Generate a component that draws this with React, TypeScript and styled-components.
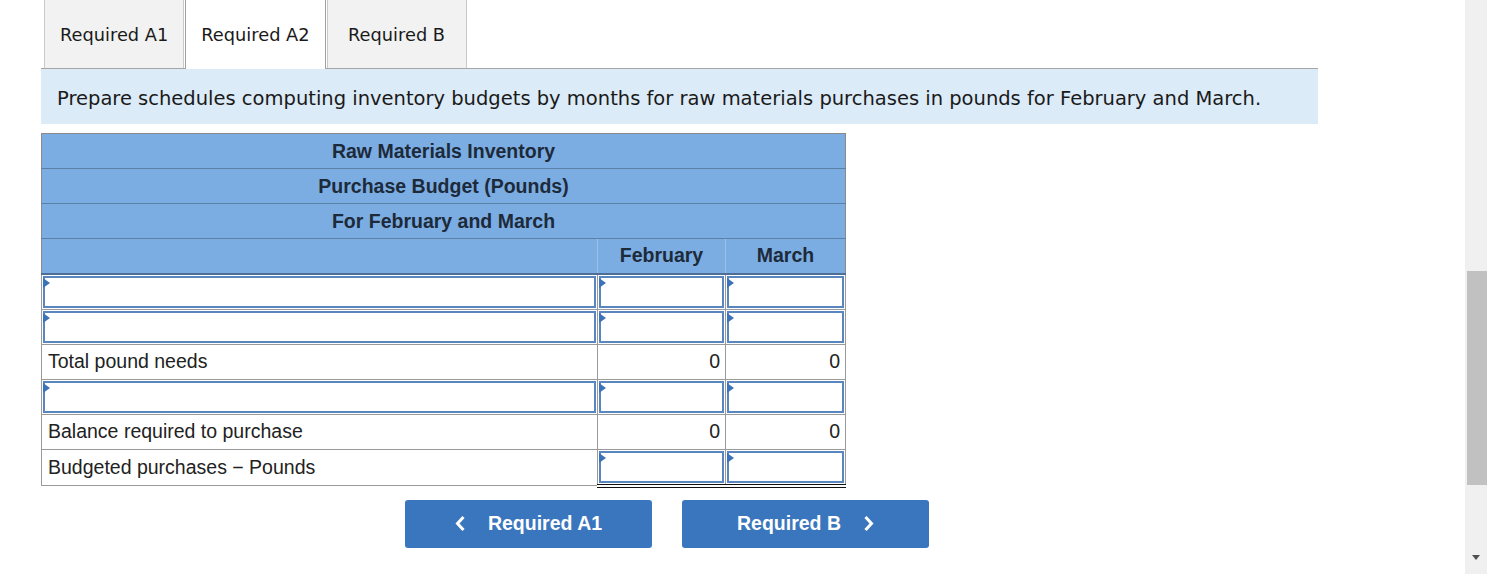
import React from 'react';
import styled, { createGlobalStyle } from 'styled-components';

const GlobalStyle = createGlobalStyle`
  html, body {
    margin: 0;
    padding: 0;
    background: #ffffff;
  }
  body {
    font-family: "Liberation Sans", Arial, sans-serif;
    color: #222;
  }
`;

const Page = styled.div`
  display: flex;
  width: 1487px;
  height: 574px;
  overflow: hidden;
`;

const Main = styled.div`
  flex: 1;
  padding-left: 41px;
`;

const TabBar = styled.div`
  display: flex;
  align-items: flex-end;
  gap: 1px;
  width: 1277px;
  height: 69px;
  padding-left: 3px;
  box-sizing: border-box;
  border-bottom: 1px solid #a6a6a6;
`;

const Tab = styled.div<{ $active?: boolean }>`
  display: flex;
  align-items: center;
  justify-content: center;
  min-width: 140px;
  height: ${p => (p.$active ? '69px' : '68px')};
  margin-bottom: ${p => (p.$active ? '-1px' : '0')};
  padding: 0 15px;
  box-sizing: border-box;
  background: ${p => (p.$active ? '#ffffff' : '#f2f2f2')};
  border: 1px solid ${p => (p.$active ? '#a0a0a0' : '#c9c9c9')};
  border-top: none;
  border-bottom: none;
  font-family: "DejaVu Sans", Verdana, sans-serif;
  font-size: 17.8px;
  color: #1a1a1a;
  white-space: nowrap;
`;

const Instructions = styled.div`
  display: flex;
  align-items: center;
  width: 1277px;
  height: 55px;
  padding: 3px 0 0 16px;
  box-sizing: border-box;
  background: #dcebf8;
  font-family: "DejaVu Sans", Verdana, sans-serif;
  font-size: 19.5px;
  color: #1a1a1a;
  white-space: nowrap;
`;

const Table = styled.table`
  margin-top: 9px;
  width: 804px;
  border-collapse: collapse;
  table-layout: fixed;
  border: 1px solid #8a8a8a;
  font-size: 19.5px;
`;

const Row = styled.tr`
  height: 35px;
`;

const TitleCell = styled.th`
  background: #7bade3;
  border-bottom: 1px solid #5f80a6;
  text-align: center;
  font-weight: bold;
  color: #1d2a3a;
  padding: 1px 0 0;
`;

const ColHead = styled.th<{ $divider?: boolean }>`
  background: #7bade3;
  border-bottom: 2px solid #4d6e95;
  border-left: ${p => (p.$divider ? '1px solid #9cc0e6' : 'none')};
  text-align: center;
  font-weight: bold;
  color: #1d2a3a;
  padding: 0;
`;

const LabelCell = styled.td`
  border: 1px solid #9a9a9a;
  padding: 0 6px;
  color: #222;
  white-space: nowrap;
`;

const ValueCell = styled.td<{ $total?: boolean }>`
  border: 1px solid #9a9a9a;
  border-top: ${p => (p.$total ? '1px solid #111' : '1px solid #9a9a9a')};
  padding: 0 5px;
  text-align: right;
  color: #222;
`;

const InputCell = styled.td<{ $double?: boolean }>`
  border: 1px solid #9a9a9a;
  border-bottom: ${p => (p.$double ? '4px double #111' : '1px solid #9a9a9a')};
  padding: 1px;
  height: 32px;
`;

const InputBox = styled.div`
  position: relative;
  height: 100%;
  box-sizing: border-box;
  border: 2px solid #5a86c0;
  background: #ffffff;

  &::before {
    content: '';
    position: absolute;
    top: 0;
    left: -2px;
    border-top: 5px solid transparent;
    border-bottom: 5px solid transparent;
    border-left: 7px solid #3c73b8;
  }
`;

const ButtonRow = styled.div`
  display: flex;
  gap: 30px;
  margin-top: 12px;
  padding-left: 364px;
`;

const NavButton = styled.button`
  display: flex;
  align-items: center;
  justify-content: center;
  gap: 22px;
  width: 247px;
  height: 48px;
  border: none;
  border-radius: 3px;
  background: #3a76bd;
  color: #ffffff;
  font-family: "Liberation Sans", Arial, sans-serif;
  font-size: 19.5px;
  font-weight: bold;
  cursor: pointer;
`;

const Scrollbar = styled.div`
  position: relative;
  width: 22px;
  height: 574px;
  background: #f0f0f0;
`;

const Thumb = styled.div`
  position: absolute;
  top: 271px;
  right: 0;
  width: 20px;
  height: 214px;
  background: #c1c1c1;
`;

const DownArrow = styled.div`
  position: absolute;
  bottom: 14px;
  left: 7px;
  border-left: 4px solid transparent;
  border-right: 4px solid transparent;
  border-top: 5px solid #505050;
`;

const Chevron: React.FC<{ dir: 'left' | 'right' }> = ({ dir }) => (
  <svg width="11" height="17" viewBox="0 0 11 17">
    <polyline
      points={dir === 'left' ? '8.5,2 2.5,8.5 8.5,15' : '2.5,2 8.5,8.5 2.5,15'}
      fill="none"
      stroke="#ffffff"
      strokeWidth="3"
    />
  </svg>
);

const InputRow: React.FC<{ double?: boolean }> = ({ double }) => (
  <Row>
    <InputCell><InputBox /></InputCell>
    <InputCell $double={double}><InputBox /></InputCell>
    <InputCell $double={double}><InputBox /></InputCell>
  </Row>
);

export default function App() {
  return (
    <>
      <GlobalStyle />
      <Page>
        <Main>
          <TabBar>
            <Tab>Required A1</Tab>
            <Tab $active>Required A2</Tab>
            <Tab>Required B</Tab>
          </TabBar>
          <Instructions>
            Prepare schedules computing inventory budgets by months for raw materials purchases in pounds for February and March.
          </Instructions>

          <Table>
            <colgroup>
              <col style={{ width: 556 }} />
              <col style={{ width: 128 }} />
              <col style={{ width: 120 }} />
            </colgroup>
            <tbody>
              <Row><TitleCell colSpan={3}>Raw Materials Inventory</TitleCell></Row>
              <Row><TitleCell colSpan={3}>Purchase Budget (Pounds)</TitleCell></Row>
              <Row><TitleCell colSpan={3}>For February and March</TitleCell></Row>
              <Row>
                <ColHead />
                <ColHead $divider>February</ColHead>
                <ColHead $divider>March</ColHead>
              </Row>
              <InputRow />
              <InputRow />
              <Row>
                <LabelCell>Total pound needs</LabelCell>
                <ValueCell $total>0</ValueCell>
                <ValueCell $total>0</ValueCell>
              </Row>
              <InputRow />
              <Row>
                <LabelCell>Balance required to purchase</LabelCell>
                <ValueCell $total>0</ValueCell>
                <ValueCell $total>0</ValueCell>
              </Row>
              <Row>
                <LabelCell>Budgeted purchases − Pounds</LabelCell>
                <InputCell $double><InputBox /></InputCell>
                <InputCell $double><InputBox /></InputCell>
              </Row>
            </tbody>
          </Table>

          <ButtonRow>
            <NavButton>
              <Chevron dir="left" />
              Required A1
            </NavButton>
            <NavButton>
              Required B
              <Chevron dir="right" />
            </NavButton>
          </ButtonRow>
        </Main>
        <Scrollbar>
          <Thumb />
          <DownArrow />
        </Scrollbar>
      </Page>
    </>
  );
}
